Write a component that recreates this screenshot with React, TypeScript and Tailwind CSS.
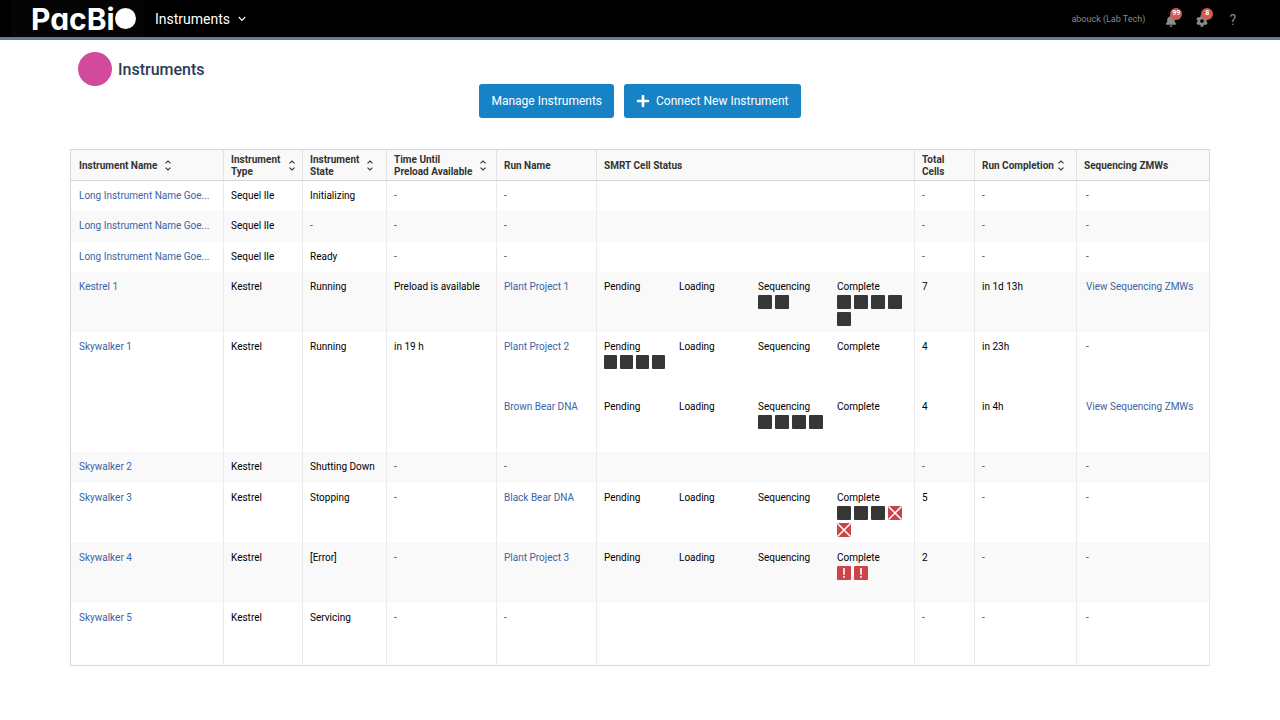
import type { ReactNode } from 'react';
import { clsx } from 'clsx';
import { FaBell, FaCog, FaPlus } from 'react-icons/fa';

type CellKind = 'ok' | 'aborted' | 'failed';
type Stage = 'Pending' | 'Loading' | 'Sequencing' | 'Complete';

interface Run {
  name: string;
  cells: Partial<Record<Stage, CellKind[]>>;
  total: number;
  completion?: string;
  hasZmws?: boolean;
}

interface Instrument {
  name: string;
  type: string;
  state?: string;
  preload?: string;
  height: string;
  runs: Run[];
}

const STAGES: Stage[] = ['Pending', 'Loading', 'Sequencing', 'Complete'];

const INSTRUMENTS: Instrument[] = [
  { name: 'Long Instrument Name Goe...', type: 'Sequel IIe', state: 'Initializing', height: 'h-[30px]', runs: [] },
  { name: 'Long Instrument Name Goe...', type: 'Sequel IIe', height: 'h-[31px]', runs: [] },
  { name: 'Long Instrument Name Goe...', type: 'Sequel IIe', state: 'Ready', height: 'h-[30px]', runs: [] },
  {
    name: 'Kestrel 1',
    type: 'Kestrel',
    state: 'Running',
    preload: 'Preload is available',
    height: 'h-[60px]',
    runs: [
      {
        name: 'Plant Project 1',
        cells: { Sequencing: ['ok', 'ok'], Complete: ['ok', 'ok', 'ok', 'ok', 'ok'] },
        total: 7,
        completion: 'in 1d 13h',
        hasZmws: true,
      },
    ],
  },
  {
    name: 'Skywalker 1',
    type: 'Kestrel',
    state: 'Running',
    preload: 'in 19 h',
    height: 'h-[60px]',
    runs: [
      { name: 'Plant Project 2', cells: { Pending: ['ok', 'ok', 'ok', 'ok'] }, total: 4, completion: 'in 23h' },
      {
        name: 'Brown Bear DNA',
        cells: { Sequencing: ['ok', 'ok', 'ok', 'ok'] },
        total: 4,
        completion: 'in 4h',
        hasZmws: true,
      },
    ],
  },
  { name: 'Skywalker 2', type: 'Kestrel', state: 'Shutting Down', height: 'h-[31px]', runs: [] },
  {
    name: 'Skywalker 3',
    type: 'Kestrel',
    state: 'Stopping',
    height: 'h-[60px]',
    runs: [{ name: 'Black Bear DNA', cells: { Complete: ['ok', 'ok', 'ok', 'aborted', 'aborted'] }, total: 5 }],
  },
  {
    name: 'Skywalker 4',
    type: 'Kestrel',
    state: '[Error]',
    height: 'h-[60px]',
    runs: [{ name: 'Plant Project 3', cells: { Complete: ['failed', 'failed'] }, total: 2 }],
  },
  { name: 'Skywalker 5', type: 'Kestrel', state: 'Servicing', height: 'h-[62px]', runs: [] },
];

function SortIcon() {
  return (
    <svg viewBox="0 0 6 12" className="h-3 w-1.5 shrink-0" fill="none" stroke="#333" strokeWidth="1.1" aria-hidden="true">
      <path d="M0.5 3.3L3 1.1L5.5 3.3M0.5 7.7L3 9.9L5.5 7.7" />
    </svg>
  );
}

interface HeaderCellProps {
  children: ReactNode;
  sortable?: boolean;
  spread?: boolean;
  tight?: boolean;
}

function HeaderCell({ children, sortable, spread, tight }: HeaderCellProps) {
  return (
    <th
      scope="col"
      className="h-8 border-y border-r border-y-[#d6d6d6] border-r-[#e2e2e2] bg-[#f9f9f9] px-[7px] pt-px text-left font-bold text-[#333] first:pl-2 last:border-r-[#d6d6d6]"
    >
      {sortable ? (
        <button
          type="button"
          className={clsx(
            'flex items-center text-left whitespace-nowrap',
            tight ? 'gap-1' : 'gap-2',
            spread && 'w-full justify-between',
          )}
        >
          <span>{children}</span>
          <SortIcon />
        </button>
      ) : (
        children
      )}
    </th>
  );
}

function Cell({ children, rowSpan, className }: { children?: ReactNode; rowSpan?: number; className?: string }) {
  return (
    <td
      rowSpan={rowSpan}
      className={clsx('border-r border-[#ebebeb] pt-2 align-top whitespace-nowrap', className ?? 'pl-[7px]')}
    >
      {children}
    </td>
  );
}

function Dash() {
  return <span className="text-[#444]">-</span>;
}

function TextLink({ children }: { children: ReactNode }) {
  return (
    <a href="#" className="text-[#3b64a4] hover:underline">
      {children}
    </a>
  );
}

function SmrtCell({ kind, narrow }: { kind: CellKind; narrow: boolean }) {
  if (kind === 'ok') return <span className={clsx('h-3.5 rounded-[1px] bg-[#363636]', narrow ? 'w-[13px]' : 'w-3.5')} />;

  return (
    <svg viewBox="0 0 14 14" className="size-3.5" role="img" aria-label={kind}>
      <rect width="14" height="14" rx="1" fill="#cb444a" />
      {kind === 'aborted' ? (
        <path d="M0.5 0.5L13.5 13.5M13.5 0.5L0.5 13.5" stroke="#fff" strokeWidth="1.5" />
      ) : (
        <path d="M7 2V8.8M7 10V11.8" stroke="#fff" strokeWidth="1.6" />
      )}
    </svg>
  );
}

function SmrtStatus({ cells }: { cells: Run['cells'] }) {
  return (
    <div className="grid grid-cols-[75px_79px_79px_1fr]">
      {STAGES.map((stage) => (
        <div key={stage}>
          <div>{stage}</div>
          <div className="mt-px flex max-w-[68px] flex-wrap gap-[3px]">
            {cells[stage]?.map((kind, i) => (
              <SmrtCell key={i} kind={kind} narrow={stage === 'Pending'} />
            ))}
          </div>
        </div>
      ))}
    </div>
  );
}

function InstrumentRows({ instrument, striped }: { instrument: Instrument; striped: boolean }) {
  const { name, type, state, preload, height, runs } = instrument;
  const span = Math.max(runs.length, 1);
  // Idle instruments still get a single row of dashes
  const rows: (Run | null)[] = runs.length > 0 ? runs : [null];

  return (
    <>
      {rows.map((run, i) => (
        <tr key={i} className={clsx(height, striped && 'bg-[#f9f9f9]')}>
          {i === 0 && (
            <>
              <Cell rowSpan={span} className="pl-2">
                <TextLink>{name}</TextLink>
              </Cell>
              <Cell rowSpan={span}>{type}</Cell>
              <Cell rowSpan={span}>{state ?? <Dash />}</Cell>
              <Cell rowSpan={span}>{preload ?? <Dash />}</Cell>
            </>
          )}
          <Cell>{run ? <TextLink>{run.name}</TextLink> : <Dash />}</Cell>
          <Cell>{run && <SmrtStatus cells={run.cells} />}</Cell>
          <Cell>{run ? run.total : <Dash />}</Cell>
          <Cell>{run?.completion ?? <Dash />}</Cell>
          <Cell className="pl-[9px]">{run?.hasZmws ? <TextLink>View Sequencing ZMWs</TextLink> : <Dash />}</Cell>
        </tr>
      ))}
    </>
  );
}

function IconWithBadge({ label, count, children }: { label: string; count: number; children: ReactNode }) {
  return (
    <button type="button" aria-label={label} className="relative pt-1 text-[#8a8a8a]">
      {children}
      <span className="absolute -top-[3px] left-[5px] flex size-3 items-center justify-center rounded-full bg-[#d05a58] text-[7px] leading-none font-bold text-white">
        {count}
      </span>
    </button>
  );
}

function TopBar() {
  return (
    <header className="flex h-10 items-center border-b-[3px] border-[#5c7ca5] bg-black pr-11 pl-[11px] text-white">
      <a
        href="#"
        className="flex h-full w-[133px] items-center bg-[#050505] pl-5 font-['Inter',sans-serif] text-[30px] leading-9 font-bold"
        aria-label="PacBio"
      >
        <span className="[font-feature-settings:'cv11']">PacBi</span>
        <span className="size-[21px] rounded-full bg-white" />
      </a>
      <button type="button" className="ml-[11px] flex items-center gap-2 text-sm">
        Instruments
        <svg viewBox="0 0 8 6" className="h-1.5 w-2" fill="none" stroke="currentColor" strokeWidth="1.1" aria-hidden="true">
          <path d="M0.8 1L4 4.4L7.2 1" />
        </svg>
      </button>
      <div className="ml-auto flex items-center">
        <span className="pt-0.5 text-[9px] text-[#8a8a8a]">abouck (Lab Tech)</span>
        <div className="ml-5 flex items-center gap-[19px]">
          <IconWithBadge label="Notifications" count={99}>
            <FaBell className="size-3" />
          </IconWithBadge>
          <IconWithBadge label="Settings" count={8}>
            <FaCog className="size-3" />
          </IconWithBadge>
          <button type="button" aria-label="Help" className="pt-0.5 pl-0.5 text-sm text-[#8a8a8a]">
            ?
          </button>
        </div>
      </div>
    </header>
  );
}

export default function App() {
  return (
    <div className="min-h-screen bg-white font-['Roboto',sans-serif] text-black">
      <TopBar />
      <main className="px-[70px] pt-3">
        <div className="flex items-center gap-1.5 pl-2">
          <span className="size-[34px] rounded-full bg-[#d24a9c]" />
          <h1 className="pt-px text-base font-medium text-[#2b3a57]">Instruments</h1>
        </div>

        <div className="-mt-0.5 flex justify-center gap-2.5 text-[12px] text-white">
          <button type="button" className="h-[34px] rounded-[3px] bg-[#1783c7] px-3">
            Manage Instruments
          </button>
          <button type="button" className="flex h-[34px] items-center gap-1.5 rounded-[3px] bg-[#1783c7] px-3">
            <FaPlus className="size-3.5" />
            Connect New Instrument
          </button>
        </div>

        <table className="mt-[31px] w-full table-fixed border-separate border-spacing-0 border-b border-l border-[#d6d6d6] text-[10px] leading-[14px]">
          <colgroup>
            <col className="w-[153px]" />
            <col className="w-[79px]" />
            <col className="w-[84px]" />
            <col className="w-[110px]" />
            <col className="w-[100px]" />
            <col />
            <col className="w-[60px]" />
            <col className="w-[102px]" />
            <col className="w-[133px]" />
          </colgroup>
          <thead className="leading-3">
            <tr>
              <HeaderCell sortable>Instrument Name</HeaderCell>
              <HeaderCell sortable spread>
                Instrument
                <br />
                Type
              </HeaderCell>
              <HeaderCell sortable>
                Instrument
                <br />
                State
              </HeaderCell>
              <HeaderCell sortable>
                Time Until
                <br />
                Preload Available
              </HeaderCell>
              <HeaderCell>Run Name</HeaderCell>
              <HeaderCell>SMRT Cell Status</HeaderCell>
              <HeaderCell>
                Total
                <br />
                Cells
              </HeaderCell>
              <HeaderCell sortable tight>
                Run Completion
              </HeaderCell>
              <HeaderCell>Sequencing ZMWs</HeaderCell>
            </tr>
          </thead>
          <tbody>
            {INSTRUMENTS.map((instrument, i) => (
              <InstrumentRows key={i} instrument={instrument} striped={i % 2 === 1} />
            ))}
          </tbody>
        </table>
      </main>
    </div>
  );
}
